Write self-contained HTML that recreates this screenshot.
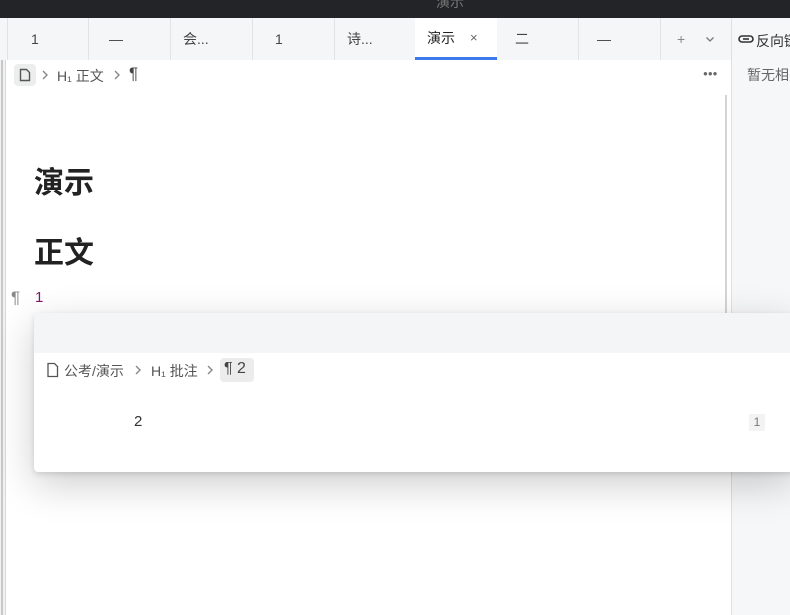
<!DOCTYPE html>
<html><head><meta charset="utf-8"><style>
*{margin:0;padding:0;box-sizing:border-box}
body{width:790px;height:615px;overflow:hidden;background:#fff;position:relative;font-family:"Liberation Sans","Noto Sans CJK SC",sans-serif;color:#333}
.abs{position:absolute}
.top{left:0;top:0;width:790px;height:18px;background:#232427}
.tabs{left:0;top:18px;width:790px;height:42px;background:#f5f6f7}
.tab{position:absolute;top:0;height:42px;width:82px;border-left:1px solid #e2e3e5;font-size:14px;color:#444;line-height:42px;padding-left:20px}
.lstrip{left:0;top:60px;width:6px;height:555px;background:#f1f2f3;border-right:1px solid #d8d8d8}
.lstrip:before{content:"";position:absolute;left:1px;top:0;width:2px;height:100%;background:#c8c8c8}
.rpanel{left:731px;top:18px;width:59px;height:597px;background:#f6f7f8;border-left:1px solid #e0e0e0}
.sb{left:725px;top:95px;width:2px;height:230px;background:#d4d4d4}
h1{position:absolute;font-size:30px;font-weight:bold;color:#222;font-family:"Liberation Sans","Noto Sans CJK SC",sans-serif}
.pop{left:34px;top:313px;width:760px;height:159px;background:#fff;border-radius:4px;box-shadow:0 12px 40px rgba(0,0,0,.2),0 2px 6px rgba(0,0,0,.12)}
.ph{left:0;top:0;width:100%;height:40px;background:#f4f5f6;border-radius:4px 4px 0 0}
.t13{font-size:14px;color:#555}
.chev{position:absolute}
</style></head><body>
<div class="abs top"><div class="abs" style="left:436px;top:-8px;font-size:14px;color:#777">演示</div></div>
<div class="abs tabs">
 <div class="tab" style="left:7px;padding-left:23px">1</div>
 <div class="tab" style="left:88px;padding-left:20px">—</div>
 <div class="tab" style="left:170px;padding-left:12px">会...</div>
 <div class="tab" style="left:252px;padding-left:22px">1</div>
 <div class="tab" style="left:334px;padding-left:12px">诗...</div>
 <div class="tab" style="left:415px;background:#fff;border-left:none;padding-left:12px;color:#222;border-bottom:3px solid #3b7ae8;line-height:40px">演示<span style="position:absolute;left:55px;color:#666;font-size:13px">×</span></div>
 <div class="tab" style="left:497px;padding-left:18px;border-left:none">二</div>
 <div class="tab" style="left:578px;padding-left:18px">—</div>
 <div class="tab" style="left:660px;padding-left:16px;color:#888;width:71px">+<svg class="chev" style="left:44px;top:16px" width="10" height="10" viewBox="0 0 10 10"><path d="M1.5 3.5l3.5 3.5 3.5-3.5" fill="none" stroke="#777" stroke-width="1.3"/></svg></div>
</div>
<div class="abs lstrip"></div>
<div class="abs rpanel">
 <svg class="abs" style="left:6px;top:15px" width="16" height="12" viewBox="0 0 16 12"><rect x="1" y="3" width="14" height="6" rx="3" fill="none" stroke="#333" stroke-width="1.6"/><path d="M5 6h6" stroke="#333" stroke-width="1.6"/></svg>
 <div class="abs" style="left:24px;top:13px;font-size:14px;color:#333;white-space:nowrap">反向链接</div>
 <div class="abs" style="left:15px;top:47px;font-size:14px;color:#666;white-space:nowrap">暂无相关</div>
</div>
<div class="abs" style="left:14px;top:64px;width:22px;height:22px;background:#eceded;border-radius:4px">
 <svg width="22" height="22" viewBox="0 0 22 22"><path d="M6.5 5.5h6l3 3v8h-9z" fill="none" stroke="#555" stroke-width="1.4"/></svg>
</div>
<svg class="abs" style="left:40px;top:69px" width="10" height="12" viewBox="0 0 10 12"><path d="M3 2l4 4-4 4" fill="none" stroke="#888" stroke-width="1.4"/></svg>
<div class="abs t13" style="left:57px;top:66px">H₁ 正文</div>
<svg class="abs" style="left:112px;top:69px" width="10" height="12" viewBox="0 0 10 12"><path d="M3 2l4 4-4 4" fill="none" stroke="#888" stroke-width="1.4"/></svg>
<div class="abs" style="left:129px;top:64px;font-size:17px;color:#444">¶</div>
<div class="abs" style="left:703px;top:69px;font-size:8px;color:#666;letter-spacing:0px">●●●</div>
<div class="abs sb"></div>
<h1 style="left:34px;top:158px">演示</h1>
<h1 style="left:34px;top:228px">正文</h1>
<div class="abs" style="left:11px;top:288px;font-size:17px;color:#888">¶</div>
<div class="abs" style="left:35px;top:289px;font-size:15px;color:#7a1a6a">1</div>
<div class="abs pop">
 <div class="abs ph"></div>
 <svg class="abs" style="left:12px;top:49px" width="14" height="16" viewBox="0 0 14 16"><path d="M2 1.5h6.5l3 3v10H2z" fill="none" stroke="#555" stroke-width="1.3"/></svg>
 <div class="abs t13" style="left:30px;top:48px">公考/演示</div>
 <svg class="abs" style="left:99px;top:51px" width="10" height="12" viewBox="0 0 10 12"><path d="M3 2l4 4-4 4" fill="none" stroke="#888" stroke-width="1.4"/></svg>
 <div class="abs t13" style="left:117px;top:48px">H₁ 批注</div>
 <svg class="abs" style="left:171px;top:51px" width="10" height="12" viewBox="0 0 10 12"><path d="M3 2l4 4-4 4" fill="none" stroke="#888" stroke-width="1.4"/></svg>
 <div class="abs" style="left:186px;top:45px;width:34px;height:24px;background:#ececec;border-radius:4px;font-size:16px;color:#444;padding:2px 0 0 4px">¶ 2</div>
 <div class="abs" style="left:100px;top:100px;font-size:15px;color:#333">2</div>
 <div class="abs" style="left:715px;top:101px;width:16px;height:17px;background:#f3f3f3;font-size:12px;color:#777;text-align:center;line-height:17px">1</div>
</div>
</body></html>
